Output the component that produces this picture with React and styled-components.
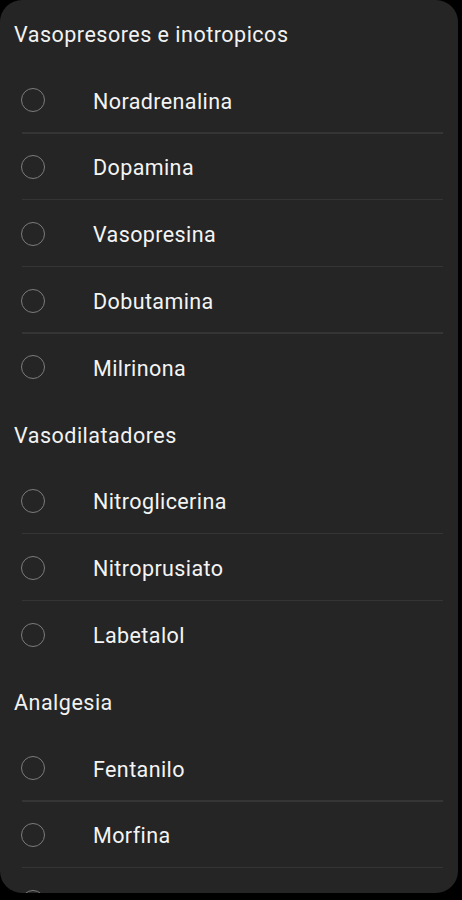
import React from "react";
import styled, { createGlobalStyle } from "styled-components";

const Global = createGlobalStyle`
  html, body { margin: 0; padding: 0; background: #000; }
  body { font-family: Roboto, "Noto Sans", "Liberation Sans", sans-serif; }
`;

const Screen = styled.div`
  width: 462px;
  height: 900px;
  background: #000;
  overflow: hidden;
`;

const Panel = styled.div`
  width: 458px;
  height: 893px;
  background: #252525;
  border-radius: 22px;
  overflow: hidden;
  display: flex;
  flex-direction: column;
`;

const Header = styled.div`
  height: 66.8px;
  flex: none;
  display: flex;
  align-items: center;
  padding: 2px 0 0 14px;
  box-sizing: border-box;
  color: #f2f2f2;
  font-size: 21.5px;
  letter-spacing: 0.5px;
`;

const Row = styled.div`
  height: 66.8px;
  flex: none;
  display: flex;
  align-items: center;
  position: relative;
  box-sizing: border-box;
  padding-left: 21px;
  &::after {
    content: "";
    display: ${(p) => (p.$divider ? "block" : "none")};
    position: absolute;
    left: 22px;
    right: 15px;
    bottom: 0;
    height: 1.5px;
    background: #353535;
  }
`;

const Radio = styled.span`
  width: 24px;
  height: 24px;
  box-sizing: border-box;
  border-radius: 50%;
  border: 1.8px solid #7c7c7c;
  flex: none;
`;

const Label = styled.span`
  margin-left: 48px;
  color: #f4f4f4;
  font-size: 21.5px;
  letter-spacing: 0.4px;
  padding-top: 2px;
`;

const groups = [
  { title: "Vasopresores e inotropicos", items: ["Noradrenalina", "Dopamina", "Vasopresina", "Dobutamina", "Milrinona"] },
  { title: "Vasodilatadores", items: ["Nitroglicerina", "Nitroprusiato", "Labetalol"] },
  { title: "Analgesia", items: ["Fentanilo", "Morfina", "Remifentanilo"] },
];

export default function App() {
  return (
    <Screen>
      <Global />
      <Panel>
        {groups.map((g) => (
          <React.Fragment key={g.title}>
            <Header>{g.title}</Header>
            {g.items.map((it, i) => (
              <Row key={it} $divider={i < g.items.length - 1}>
                <Radio />
                <Label>{it}</Label>
              </Row>
            ))}
          </React.Fragment>
        ))}
      </Panel>
    </Screen>
  );
}
